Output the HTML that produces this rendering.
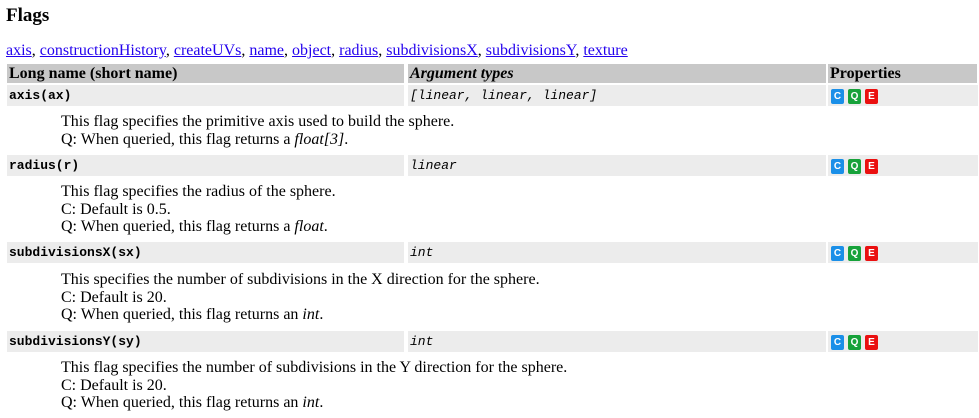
<!DOCTYPE html>
<html><head><style>
body{margin:0;background:#fff;font-family:"Liberation Serif",serif;font-size:16px;color:#000;width:979px;height:418px;position:relative;overflow:hidden}
.a{position:absolute;white-space:nowrap}
h2{position:absolute;left:6px;top:5px;margin:0;font-size:19px;font-weight:bold}
a{color:#2200ee;text-decoration:underline}
.hd{background:#c8c8c8;height:19px;top:64px;font-weight:bold;line-height:19px}
.rw{background:#ececec;height:21px;line-height:21px}
.m{font-family:"Liberation Mono",monospace;font-size:13px}
.b{font-weight:bold}
.i{font-style:italic}
.bd{display:inline-block;width:13px;height:15px;border-radius:2px;color:#fff;font-family:"Liberation Sans",sans-serif;font-size:10px;font-weight:bold;text-align:center;line-height:15px;margin-right:4px;vertical-align:middle}
.c{background:#1a8fe8}.q{background:#17a23a}.e{background:#ea1010}
.d{left:61px;line-height:17.5px}
</style></head><body>
<h2>Flags</h2>
<div class="a" style="left:6px;top:42px"><a>axis</a>, <a>constructionHistory</a>, <a>createUVs</a>, <a>name</a>, <a>object</a>, <a>radius</a>, <a>subdivisionsX</a>, <a>subdivisionsY</a>, <a>texture</a></div>

<div class="a hd" style="left:7px;width:395px;padding-left:2px">Long name (short name)</div>
<div class="a hd i" style="left:408px;width:416px;padding-left:2px">Argument types</div>
<div class="a hd" style="left:828px;width:147px;padding-left:2px">Properties</div>

<div class="a rw m b" style="top:85px;left:7px;width:395px;padding-left:2px">axis(ax)</div>
<div class="a rw m i" style="top:85px;left:408px;width:416px;padding-left:2px">[linear, linear, linear]</div>
<div class="a rw" style="top:85px;left:828px;width:147px;padding-left:3px"><span class="bd c">C</span><span class="bd q">Q</span><span class="bd e">E</span></div>
<div class="a d" style="top:113px">This flag specifies the primitive axis used to build the sphere.<br>Q: When queried, this flag returns a <i>float[3]</i>.</div>

<div class="a rw m b" style="top:155px;left:7px;width:395px;padding-left:2px">radius(r)</div>
<div class="a rw m i" style="top:155px;left:408px;width:416px;padding-left:2px">linear</div>
<div class="a rw" style="top:155px;left:828px;width:147px;padding-left:3px"><span class="bd c">C</span><span class="bd q">Q</span><span class="bd e">E</span></div>
<div class="a d" style="top:183px">This flag specifies the radius of the sphere.<br>C: Default is 0.5.<br>Q: When queried, this flag returns a <i>float</i>.</div>

<div class="a rw m b" style="top:242px;left:7px;width:395px;padding-left:2px">subdivisionsX(sx)</div>
<div class="a rw m i" style="top:242px;left:408px;width:416px;padding-left:2px">int</div>
<div class="a rw" style="top:242px;left:828px;width:147px;padding-left:3px"><span class="bd c">C</span><span class="bd q">Q</span><span class="bd e">E</span></div>
<div class="a d" style="top:271px">This specifies the number of subdivisions in the X direction for the sphere.<br>C: Default is 20.<br>Q: When queried, this flag returns an <i>int</i>.</div>

<div class="a rw m b" style="top:331px;left:7px;width:395px;padding-left:2px">subdivisionsY(sy)</div>
<div class="a rw m i" style="top:331px;left:408px;width:416px;padding-left:2px">int</div>
<div class="a rw" style="top:331px;left:828px;width:147px;padding-left:3px"><span class="bd c">C</span><span class="bd q">Q</span><span class="bd e">E</span></div>
<div class="a d" style="top:359px">This flag specifies the number of subdivisions in the Y direction for the sphere.<br>C: Default is 20.<br>Q: When queried, this flag returns an <i>int</i>.</div>
</body></html>
